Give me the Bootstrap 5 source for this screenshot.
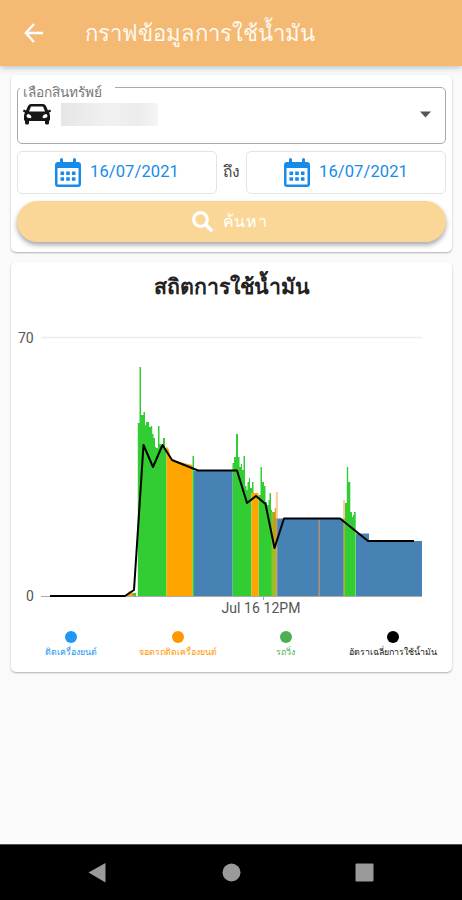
<!DOCTYPE html>
<html lang="th">
<head>
<meta charset="utf-8">
<meta name="viewport" content="width=device-width, initial-scale=1">
<title>กราฟข้อมูลการใช้น้ำมัน</title>
<link href="https://cdn.jsdelivr.net/npm/bootstrap@5.3.0/dist/css/bootstrap.min.css" rel="stylesheet">
<style>
body{font-family:Roboto,"Noto Sans","Liberation Sans",sans-serif;background:#fafafa;height:900px;overflow:hidden}
.appbar{height:66px;background:#f4b973;box-shadow:0 2px 6px rgba(70,100,110,.35);padding-left:23px}
.appbar h1{font-size:22.1px;font-weight:400;margin-left:41px;line-height:30px;color:#fffaf0}
.panel{border:0;border-radius:5px;box-shadow:0 1px 2px rgba(0,0,0,.3);margin:0 10px 0 11px}
.search-panel{height:177px;margin-top:9px;padding:12px 6px 0}
.picker{height:57px;border:1px solid #a9a9a9;border-radius:5px;padding:0 14px 3px 5px}
.picker-label{top:-3px;left:2px;background:#fff;padding:0 4px 0 3px;font-size:13.7px;line-height:14px;color:#777;width:95px}
.redacted{width:97px;height:23px;margin-left:10px;background:linear-gradient(90deg,#e6e6e6,#f1f1f1 50%,#ececec 80%,#f5f5f5)}
.dates{margin-top:7px;height:43px}
.date-btn{width:200px;height:43px;border:1px solid #e4e4e4;border-radius:5px;background:#fff;color:#168bea;font-size:16.5px;letter-spacing:.1px;gap:9px}
.until{font-size:15.500px;color:#444}
.find-btn{height:41px;margin-top:7px;background:#fbd797;box-shadow:0 3px 5px rgba(0,0,0,.35);color:#fff;font-size:16px;letter-spacing:.6px;gap:10px;padding-right:4px!important}
.chart-panel{height:410px;margin-top:10px}
.chart-panel h2{font-size:21.3px;font-weight:700;line-height:30px;margin:10px 0 0;color:#222}
.chart{width:442px;height:310px;margin-top:9px;font-size:14px}
.legend-row{padding:0 3px 0 6px;margin-top:10px}
.legend-row>div{width:107.5px;font-size:8.9px;line-height:12px;white-space:nowrap}
.dot{width:12px;height:12px;margin-bottom:3px}
.sysbar{height:56px;background:#000;border-top:1px solid #555}
</style>
</head>
<body class="d-flex flex-column">
<header class="appbar navbar navbar-expand p-0 ps-4 flex-shrink-0">
  <svg width="20" height="20" viewBox="0 0 20 20" fill="none" stroke="#fff" stroke-width="2.4"><path d="M19 10H2M10 1L1.8 10L10 19"/></svg>
  <h1 class="mb-0">กราฟข้อมูลการใช้น้ำมัน</h1>
</header>
<main class="flex-grow-1">
  <section class="card panel search-panel">
    <div class="picker position-relative d-flex align-items-center">
      <span class="picker-label position-absolute">เลือกสินทรัพย์</span>
      <svg width="28" height="22" viewBox="0 0 28 22"><path fill="#161616" fill-rule="evenodd" d="M8 1H20Q22 1 23 3L25 7.500L27 6.500Q28.500 7.500 27.500 9L26 9.500Q27 11 27 13V17L26 18V20Q26 21.500 24.500 21.500H23.500Q22 21.500 22 20V18H6V20Q6 21.500 4.500 21.500H3.500Q2 21.500 2 20V18L1 17V13Q1 11 2 9.500L.5 9Q-.5 7.500 1 6.500L3 7.500L5 3Q6 1 8 1ZM8 3.500L6 8.500H22L20 3.500ZM5.500 11Q3.500 11 3.500 13T6 15Q8.500 15.500 8.500 14Q8 11.500 5.500 11ZM22.500 11Q20 11.500 19.500 14Q19.500 15.500 22 15Q24.500 15 24.500 13T22.500 11Z"/></svg>
      <span class="redacted"></span>
      <svg class="ms-auto" width="11" height="7" viewBox="0 0 11 7"><path d="M0 .5H11L5.5 6.5Z" fill="#555"/></svg>
    </div>
    <div class="dates d-flex justify-content-between align-items-center">
      <button class="btn date-btn p-0 d-flex align-items-center justify-content-center">
        <svg width="26" height="29" viewBox="0 0 26 29"><path fill="#168bea" fill-rule="evenodd" d="M5 1.500Q5 0 6.500 0T8 1.500V4H18V1.500Q18 0 19.500 0T21 1.500V4H23Q26 4 26 7V26Q26 29 23 29H3Q0 29 0 26V7Q0 4 3 4H5ZM2.500 10V26.500H23.500V10Z"/><path stroke="#168bea" stroke-width="3.4" stroke-dasharray="3.600 2.100" d="M5.500 15.200H20.500M5.500 21H20.500"/></svg>
        <span>16/07/2021</span>
      </button>
      <span class="until">ถึง</span>
      <button class="btn date-btn p-0 d-flex align-items-center justify-content-center">
        <svg width="26" height="29" viewBox="0 0 26 29"><path fill="#168bea" fill-rule="evenodd" d="M5 1.500Q5 0 6.500 0T8 1.500V4H18V1.500Q18 0 19.500 0T21 1.500V4H23Q26 4 26 7V26Q26 29 23 29H3Q0 29 0 26V7Q0 4 3 4H5ZM2.500 10V26.500H23.500V10Z"/><path stroke="#168bea" stroke-width="3.4" stroke-dasharray="3.600 2.100" d="M5.500 15.200H20.500M5.500 21H20.500"/></svg>
        <span>16/07/2021</span>
      </button>
    </div>
    <button class="btn find-btn rounded-pill border-0 p-0 d-flex align-items-center justify-content-center">
      <svg width="21" height="21" viewBox="0 0 21 21" fill="none" stroke="#fff" stroke-linecap="round"><circle cx="8.5" cy="8.5" r="6.8" stroke-width="3.2"/><path d="M13.800 13.800L19 19" stroke-width="3.6"/></svg>
      <span>ค้นหา</span>
    </button>
  </section>
  <section class="card panel chart-panel">
    <h2 class="text-center">สถิตการใช้น้ำมัน</h2>
    <!-- viewBox keeps the chart in page units, so series points read as screen positions -->
    <svg class="chart d-block" viewBox="11 311 442 310">
      <path d="M41 337.500H422" stroke="#ececec" stroke-width="1.5"/>
      <path d="M41 596.500H422M263.500 596V600" stroke="#aaa"/>
      <g fill="#32cd32">
        <path d="M133 596V593H136V596ZM137.800 596V423H139.500V367H141V415H143.500V412H145V424L146 426V422H149V427H151V426H152.200V434H153.500V438H155V447H156V448H158V426H159.500V444H161V446H163V438H165V448H166.500V596Z"/>
        <path d="M232.500 596V463H234V457H236V434H238V457H239.500V467H241V464H242V470H243.500V456H245V486H246.500V490H247.500V482H249V478H250V488H252V482H253.500V493H251.500V596ZM258.500 596V495H260.500V467H262V482H264V486H265.500V502H267V505H268.500V500H269.500V493H271V510H272V596Z"/>
        <path d="M345 596V503H346.800V467H348.200V482H350.300V512H352V517H353V515H354V512H355.700V596Z"/>
      </g>
      <g fill="#ffa500"><path d="M126 596L129 591L133 593V596ZM166.500 596V446L169 450L171 460L192.500 465V596ZM251.500 596V493H258.500V596Z"/></g>
      <path fill="#4682b4" d="M194 596V471H232.500V596ZM277 596V518.500H343.500V596ZM356 596V533.500H369V541H422V596Z"/>
      <path fill="#32cd32" d="M192.500 456H194V596H192.500Z"/>
      <path fill="#9dbe22" d="M271.500 596V512H276V596ZM343.500 596V518H345V596Z"/>
      <path fill="#c0a018" d="M273 512H274.800V508H276.500V548H273Z"/>
      <path fill="#ffcc9e" d="M275.800 492H278V518.500H275.800ZM343 500H345V518.500H343Z"/>
      <path fill="#a9917d" d="M276.200 518.500H277.600V596H276.200ZM318.400 519H320V596H318.400ZM343 519H344V596H343Z"/>
      <path fill="none" stroke="#000" stroke-width="2" stroke-linejoin="round" d="M50 596H125L134 590L143.500 445L153 467L162.500 445L172 460L198 470.500H237L247 503L256 496L265.500 504L274.500 548L284 518.500H340L368 541H414"/>
      <g fill="#555"><text x="18" y="342.500">70</text><text x="26" y="601">0</text><text x="221.500" y="612.500" textLength="79">Jul 16 12PM</text></g>
    </svg>
    <div class="legend-row d-flex text-center">
      <div style="color:#2196f3"><span class="dot rounded-circle d-block mx-auto" style="background:#2196f3"></span><span>ติดเครื่องยนต์</span></div>
      <div style="color:#ff9800"><span class="dot rounded-circle d-block mx-auto" style="background:#ff9800"></span><span>จอดรถติดเครื่องยนต์</span></div>
      <div style="color:#4caf50"><span class="dot rounded-circle d-block mx-auto" style="background:#4caf50"></span><span>รถวิ่ง</span></div>
      <div style="color:#222"><span class="dot rounded-circle d-block mx-auto" style="background:#000"></span><span>อัตราเฉลี่ยการใช้น้ำมัน</span></div>
    </div>
  </section>
</main>
<footer class="sysbar d-flex flex-shrink-0">
  <svg class="w-100" height="55" viewBox="0 0 462 55" fill="#9a9a9a"><path d="M88.500 27.500L105.500 18V37.500Z"/><circle cx="231.500" cy="27.500" r="9"/><rect x="355.500" y="18.500" width="18" height="18" rx="1"/></svg>
</footer>
<script src="https://cdn.jsdelivr.net/npm/bootstrap@5.3.0/dist/js/bootstrap.bundle.min.js"></script>
</body>
</html>
